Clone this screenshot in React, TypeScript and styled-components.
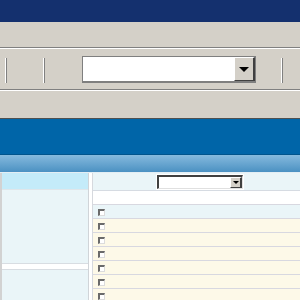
import styled, { createGlobalStyle } from "styled-components";

const Global = createGlobalStyle`
  html, body { margin: 0; padding: 0; background: #d4d0c8; }
  body { font-family: "Liberation Sans", Arial, sans-serif; font-size: 11px; overflow: hidden; }
`;

/* ── Window chrome ── */

const Page = styled.div`
  width: 300px;
  height: 300px;
  display: flex;
  flex-direction: column;
  overflow: hidden;
`;

const TitleBar = styled.div`
  height: 22px;
  background: #14306e;
  flex: none;
`;

const MenuBar = styled.div`
  height: 25px;
  background: #d4d0c8;
  border-bottom: 1px solid #808080;
  box-shadow: 0 1px 0 #ffffff;
  margin-bottom: 1px;
  flex: none;
`;

const Toolbar = styled.div`
  height: 40px;
  background: #d4d0c8;
  display: flex;
  align-items: center;
  border-bottom: 1px solid #808080;
  box-shadow: 0 1px 0 #ffffff;
  margin-bottom: 1px;
  flex: none;
`;

const Separator = styled.div<{ $left: number }>`
  width: 0;
  height: 25px;
  margin-left: ${(p) => p.$left}px;
  border-left: 1px solid #ffffff;
  border-right: 1px solid #808080;
  margin-top: 2px;
  flex: none;
`;

const Combo = styled.div<{ $w: number; $h: number }>`
  width: ${(p) => p.$w}px;
  height: ${(p) => p.$h}px;
  box-sizing: border-box;
  background: #ffffff;
  border: 1px solid #7f7f7f;
  border-bottom-width: 2px;
  display: flex;
  justify-content: flex-end;
  flex: none;
`;

const ComboButton = styled.div<{ $w: number }>`
  width: ${(p) => p.$w}px;
  box-sizing: border-box;
  background: #d4d0c8;
  border-top: 1px solid #ffffff;
  border-left: 1px solid #ffffff;
  border-right: 2px solid #404040;
  border-bottom: 1px solid #404040;
  display: flex;
  align-items: center;
  justify-content: center;
`;

const Arrow = styled.div<{ $size: number }>`
  width: 0;
  height: 0;
  border-left: ${(p) => p.$size}px solid transparent;
  border-right: ${(p) => p.$size}px solid transparent;
  border-top: ${(p) => p.$size}px solid #000000;
  margin-top: 1px;
`;

const Strip = styled.div`
  height: 27px;
  background: #d4d0c8;
  border-bottom: 1px solid #505050;
  flex: none;
`;

const Banner = styled.div`
  height: 35px;
  background: #0065a8;
  border-bottom: 1px solid #00548c;
  flex: none;
`;

const GradientBar = styled.div`
  height: 17px;
  background: linear-gradient(#86bade, #4b91c2);
  flex: none;
`;

/* ── Content ── */

const Content = styled.div`
  flex: 1;
  display: flex;
  background: #ffffff;
  border-top: 1px solid #e4eef4;
`;

const LeftPanel = styled.div`
  width: 86px;
  border-left: 2px solid #d2d2d2;
  border-right: 1px solid #d0d4d8;
  background: #eaf5f8;
  display: flex;
  flex-direction: column;
  flex: none;
`;

const LeftHead = styled.div`
  height: 16px;
  background: #c4ebf9;
  border-bottom: 1px solid #dfe6ea;
`;

const LeftBlock = styled.div`
  height: 73px;
  background: #eaf5f8;
`;

const LeftGap = styled.div`
  height: 5px;
  background: #ffffff;
  border-top: 1px solid #d8dde2;
  border-bottom: 1px solid #d8dde2;
`;

const Divider = styled.div`
  width: 3px;
  background: #ffffff;
  border-right: 1px solid #d6d9de;
  flex: none;
`;

const RightPanel = styled.div`
  flex: 1;
  display: flex;
  flex-direction: column;
`;

const FilterRow = styled.div`
  height: 17px;
  background: #eaf5f8;
  border-bottom: 1px solid #d6dbe2;
  display: flex;
  align-items: center;
  padding-left: 64px;
`;

const SmallCombo = styled(Combo)`
  border: 2px solid #404040;
  border-right-color: #e0e0e0;
  border-bottom-color: #e0e0e0;
  border-bottom-width: 1px;
  border-right-width: 1px;
  outline: 1px solid #ffffff;
`;

const Row = styled.div<{ $bg: string }>`
  height: 13px;
  background: ${(p) => p.$bg};
  border-bottom: 1px solid #d8d8e0;
  display: flex;
  align-items: center;
  padding-left: 5px;
`;

const Check = styled.div`
  width: 7px;
  height: 7px;
  box-sizing: border-box;
  background: #ffffff;
  border-top: 2px solid #6a6a6a;
  border-left: 2px solid #6a6a6a;
  border-right: 1px solid #dcdcdc;
  border-bottom: 1px solid #dcdcdc;
  margin-top: 1px;
`;

const rows = ["#eaf5f8", "#fdf9e8", "#fdf9e8", "#fdf9e8", "#fdf9e8", "#fdf9e8", "#fdf9e8"];

export default function App() {
  return (
    <Page>
      <Global />
      <TitleBar />
      <MenuBar />
      <Toolbar>
        <Separator $left={5} />
        <Separator $left={36} />
        <Combo $w={174} $h={27} style={{ marginLeft: 37 }}>
          <ComboButton $w={21}>
            <Arrow $size={5} />
          </ComboButton>
        </Combo>
        <Separator $left={25} />
      </Toolbar>
      <Strip />
      <Banner />
      <GradientBar />
      <Content>
        <LeftPanel>
          <LeftHead />
          <LeftBlock />
          <LeftGap />
        </LeftPanel>
        <Divider />
        <RightPanel>
          <FilterRow>
            <SmallCombo $w={86} $h={14}>
              <ComboButton $w={12}>
                <Arrow $size={3} />
              </ComboButton>
            </SmallCombo>
          </FilterRow>
          <Row $bg="#ffffff" />
          {rows.map((bg, i) => (
            <Row key={i} $bg={bg}>
              <Check />
            </Row>
          ))}
        </RightPanel>
      </Content>
    </Page>
  );
}
